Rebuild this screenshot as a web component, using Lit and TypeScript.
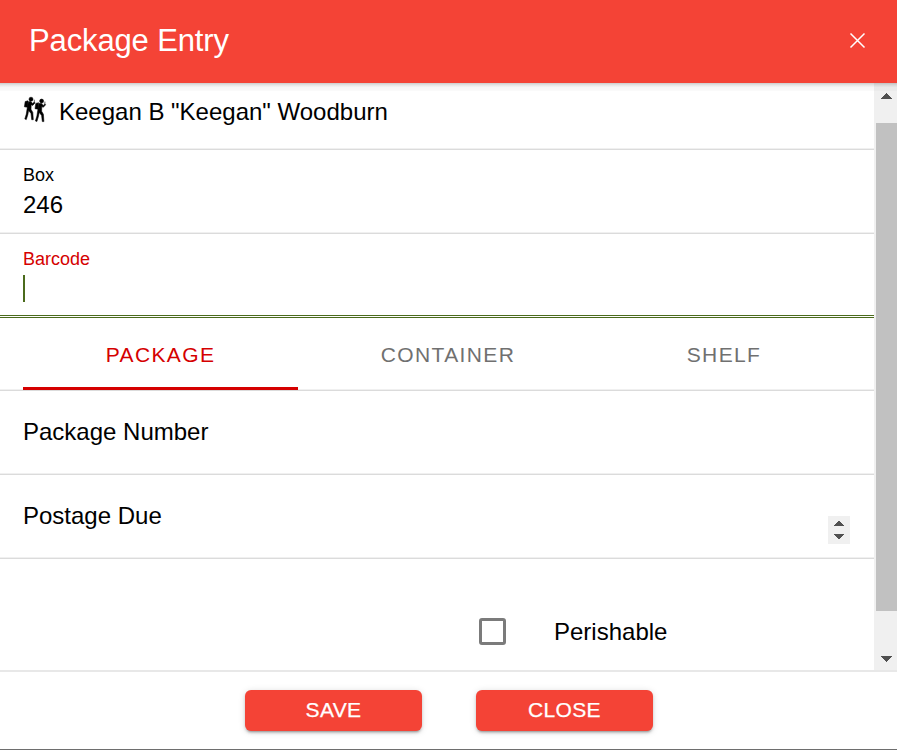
import { LitElement, html, svg, css } from "lit";
import { customElement, state } from "lit/decorators.js";

@customElement("app-root")
export class AppRoot extends LitElement {
  @state() private tab = 0;

  private tabs = ["Package", "Container", "Shelf"];

  static styles = css`
    :host {
      display: flex;
      flex-direction: column;
      box-sizing: border-box;
      height: 750px;
      overflow: hidden;
      background: #fff;
      border-bottom: 1px solid #6e6e6e;
      font-family: "Liberation Sans", Arial, sans-serif;
      font-size: 24px;
      line-height: 28px;
      color: #000;
    }
    * { box-sizing: border-box; }
    svg { display: block; }
    header {
      flex: none;
      height: 83px;
      display: flex;
      align-items: center;
      justify-content: space-between;
      padding: 0 31px 2px 29px;
      background: #f44336;
      color: #fff;
    }
    .title { font-size: 31px; line-height: 36px; letter-spacing: -.13px; }
    .body {
      flex: none;
      height: 587px;
      display: flex;
      position: relative;
    }
    .shade {
      position: absolute;
      left: 0;
      right: 0;
      top: 0;
      height: 8px;
      background: linear-gradient(rgba(0,0,0,.2), rgba(0,0,0,.1) 25%, rgba(0,0,0,.03) 55%, rgba(0,0,0,.02));
    }
    .form { width: 874px; flex: none; }
    .row {
      border-bottom: 1px solid #dbdbdb;
      box-shadow: inset 0 -1px #f0f0f0;
      padding-left: 23px;
    }
    .person { height: 67px; display: flex; padding-top: 13px; }
    .person svg { margin-right: 11px; }
    .person span { margin-top: 2px; }
    .field { height: 84px; padding-top: 14px; }
    .label { font-size: 18px; line-height: 22px; }
    .value { margin-top: 5px; }
    .focus {
      height: 84px;
      padding: 14px 0 0 23px;
      border-bottom: 3px double #4b6b1c;
    }
    .focus .label { color: #d50000; }
    .caret { width: 2px; height: 27px; margin-top: 5px; background: #4b6b1c; }
    .tabs { height: 73px; display: flex; padding-right: 12px; }
    .tab {
      flex: 1;
      display: flex;
      justify-content: center;
      padding-top: 23px;
      font-size: 21px;
      letter-spacing: 1.38px;
      line-height: 28px;
      text-transform: uppercase;
      color: #707070;
    }
    .tab:first-child { flex: 0 0 275px; margin-right: 12px; }
    .on { color: #d50000; border-bottom: 3px solid #d50000; height: 72px; }
    .single {
      height: 84px;
      display: flex;
      padding-top: 27px;
      padding-right: 24px;
      justify-content: space-between;
    }
    .spin {
      width: 22px;
      height: 28px;
      margin-top: 14px;
      background: #f0f0f0;
    }
    .check { display: flex; align-items: flex-start; padding: 59px 0 0 479px; gap: 48px; }
    .box { width: 27px; height: 27px; border: 3px solid #7b7b7b; border-radius: 3px; }
    .scroll {
      flex: none;
      width: 23px;
      background: #f0f0f0;
      display: flex;
      flex-direction: column;
    }
    .arrow { height: 40px; }
    .thumb { height: 488px; margin-left: 2px; background: #c1c1c1; }
    .down { height: 59px; }
    footer {
      flex: 1;
      display: flex;
      justify-content: center;
      gap: 54px;
      border-top: 2px solid #e8e8e8;
      padding: 18px 0 0 1px;
    }
    .btn {
      width: 177px;
      height: 41px;
      display: flex;
      justify-content: center;
      border: 0;
      padding: 6px 0 0;
      border-radius: 6px;
      background: #f44336;
      color: #fff;
      font: 21px/28px "Liberation Sans", Arial, sans-serif;
      letter-spacing: .35px;
      -webkit-text-stroke: .25px #fff;
      text-transform: uppercase;
      box-shadow: 0 3px 2px -2px rgba(0,0,0,.22), 0 2px 3px rgba(0,0,0,.16), 0 1px 7px rgba(0,0,0,.13);
    }
  `;

  private hiker(x: number, y: number) {
    return svg`
      <g transform="translate(${x} ${y})" stroke="#000" stroke-width=".55" stroke-linejoin="round">
        <circle cx="7.600" cy="2.700" r="2" />
        <path d="M1.800 5L4.600 4.300 4.400 10.800 1 10.300z" />
        <path d="M5 5.200l2.500-.2 1.700 2 1.700-1.500.7.900-2.300 2.500-1.500-.7-.2 4.600 1.800 3.100.5 7.300H8.300l-.7-6.200L5.200 14l-.7 3.900-1.600 5.200-1.500-.6 1.500-4.900.8-5.300z" />
        <path d="M10.900 3.200v3" stroke-width=".6" />
      </g>
    `;
  }

  render() {
    return html`
      <header>
        <div class="title">Package Entry</div>
        <svg width="17" height="17" viewBox="0 0 17 17" stroke="#fff" stroke-width="1.5" fill="none">
          <path d="M1.500 1.500l14 14M15.500 1.500l-14 14" />
        </svg>
      </header>
      <div class="body">
        <div class="form">
          <div class="row person">
            <svg width="25" height="28" viewBox="0 0 25 28">
              ${this.hiker(0.4, 0.5)}
              ${this.hiker(11, 2.4)}
            </svg>
            <span>Keegan B "Keegan" Woodburn</span>
          </div>
          <div class="row field">
            <div class="label">Box</div>
            <div class="value">246</div>
          </div>
          <div class="focus">
            <div class="label">Barcode</div>
            <div class="caret"></div>
          </div>
          <div class="row tabs">
            ${this.tabs.map((t, i) => html`<div class="tab ${i === this.tab ? "on" : ""}" @click=${() => (this.tab = i)}>${t}</div>`)}
          </div>
          <div class="row single"><span>Package Number</span></div>
          <div class="row single">
            <span>Postage Due</span>
            <svg class="spin" viewBox="0 0 22 28" fill="#505050" shape-rendering="crispEdges">
              <path d="M11 5l5.500 5h-11zM11 23l5.500-5h-11z" />
            </svg>
          </div>
          <div class="check"><div class="box"></div><span>Perishable</span></div>
        </div>
        <div class="scroll">
          <svg class="arrow" viewBox="0 0 23 40" fill="#505050" shape-rendering="crispEdges"><path d="M12.500 10l6 6h-12z" /></svg>
          <div class="thumb"></div>
          <svg class="down" viewBox="0 0 23 59" fill="#505050" shape-rendering="crispEdges"><path d="M12.500 51l6-6h-12z" /></svg>
        </div>
        <div class="shade"></div>
      </div>
      <footer>
        <button class="btn">Save</button>
        <button class="btn">Close</button>
      </footer>
    `;
  }
}
